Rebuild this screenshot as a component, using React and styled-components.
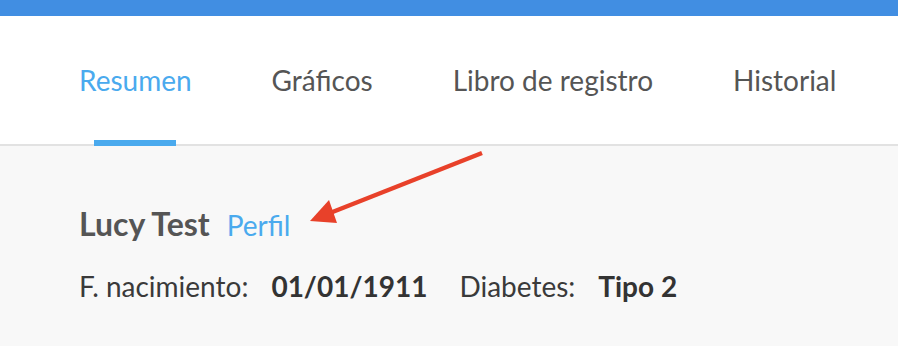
import React from 'react'
import styled, { createGlobalStyle } from 'styled-components';

const GlobalStyle = createGlobalStyle`
  html, body {
    margin: 0;
    padding: 0;
    background: #f8f8f8;
    font-family: Lato, "Open Sans", sans-serif;
  }
`;

const Page = styled.div`
  position: relative;
  width: 898px;
  height: 346px;
  overflow: hidden;
  background: #f8f8f8;
`;

const TopBar = styled.div`
  height: 16px;
  background: #418ee2;
`;

const Nav = styled.nav`
  display: flex;
  align-items: stretch;
  gap: 80px;
  height: 128px;
  padding-left: 79px;
  background: #ffffff;
  border-bottom: 2px solid #e2e2e2;
  box-sizing: content-box;
`;

const Tab = styled.div`
  position: relative;
  display: flex;
  align-items: center;
  font-size: 28px;
  color: ${p => (p.$active ? '#4aaaee' : '#555555')};
  cursor: pointer;

  &::after {
    content: '';
    display: ${p => (p.$active ? 'block' : 'none')};
    position: absolute;
    left: 50%;
    bottom: -2px;
    width: 82px;
    height: 6px;
    margin-left: -41px;
    background: #4aaaee;
  }
`;

const Content = styled.section`
  padding: 58px 0 0 79px;
`;

const NameRow = styled.div`
  display: flex;
  align-items: baseline;
  gap: 17px;
  line-height: 40px;
`;

const Name = styled.span`
  font-size: 32px;
  font-weight: 700;
  color: #555555;
`;

const ProfileLink = styled.a`
  font-size: 28px;
  color: #4aaaee;
  text-decoration: none;
  cursor: pointer;
`;

const InfoRow = styled.div`
  display: flex;
  align-items: baseline;
  margin-top: 25px;
  font-size: 28px;
  line-height: 32px;
  color: #3a3a3a;
`;

const Label = styled.span`
  margin-right: 23px;
`;

const Value = styled.span`
  font-weight: 700;
  color: #333333;
  margin-right: ${p => (p.$last ? '0' : '32px')};
`;

const Arrow = styled.svg`
  position: absolute;
  left: 300px;
  top: 140px;
`;

function App() {
  return (
    <>
      <GlobalStyle />
      <Page>
        <TopBar />
        <Nav>
          <Tab $active>Resumen</Tab>
          <Tab>Gráficos</Tab>
          <Tab>Libro de registro</Tab>
          <Tab>Historial</Tab>
        </Nav>
        <Content>
          <NameRow>
            <Name>Lucy Test</Name>
            <ProfileLink>Perfil</ProfileLink>
          </NameRow>
          <InfoRow>
            <Label>F. nacimiento:</Label>
            <Value>01/01/1911</Value>
            <Label>Diabetes:</Label>
            <Value $last>Tipo 2</Value>
          </InfoRow>
        </Content>
        {/* annotation arrow */}
        <Arrow width="200" height="100" viewBox="0 0 200 100">
          <line x1="182" y1="13" x2="30" y2="73" stroke="#e8412a" strokeWidth="4.5" />
          <polygon points="10,81 29,60 37,83" fill="#e8412a" />
        </Arrow>
      </Page>
    </>
  )
}

export default App
